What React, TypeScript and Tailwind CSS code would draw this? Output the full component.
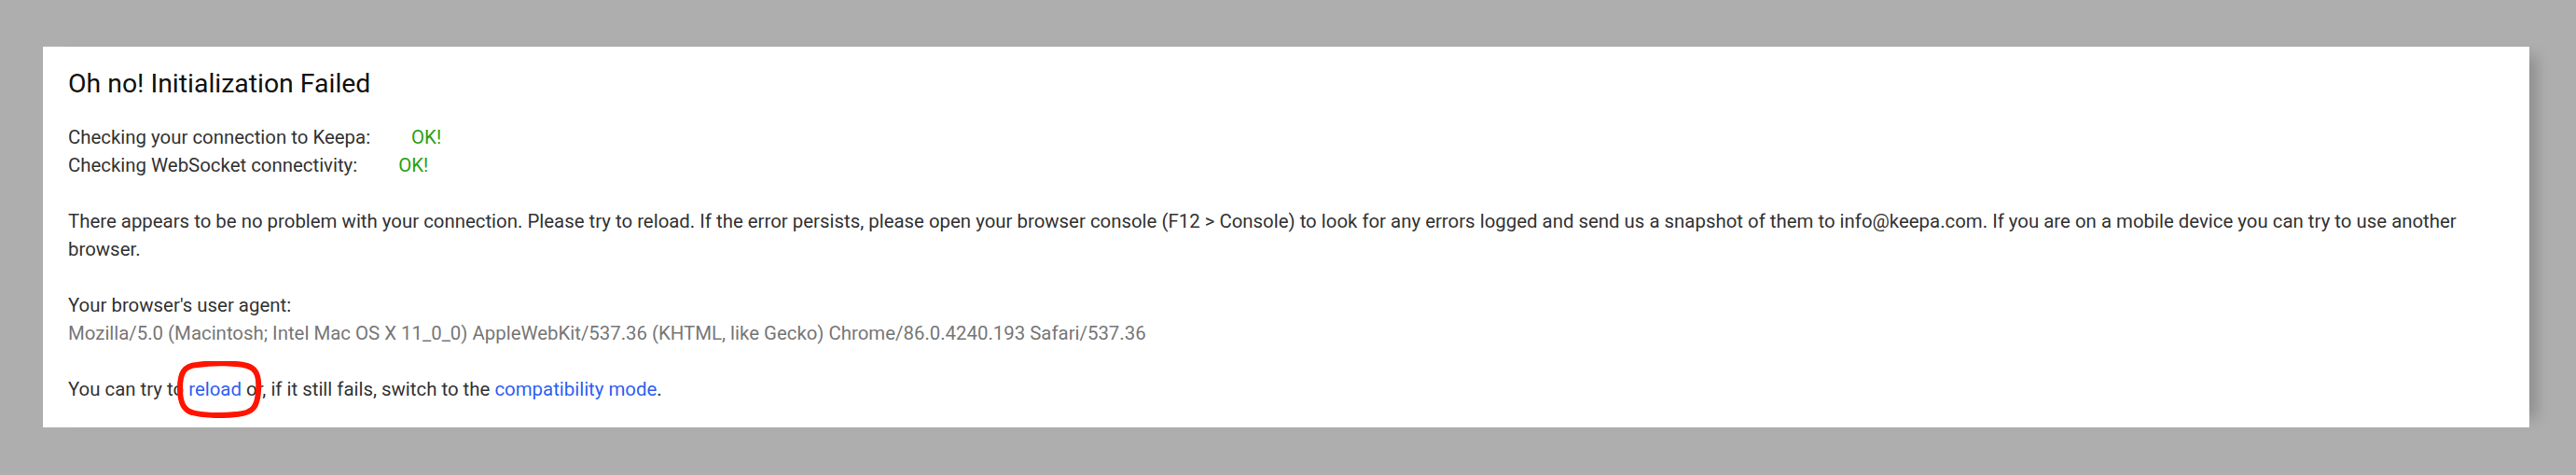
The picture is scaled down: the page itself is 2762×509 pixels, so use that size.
export default function App() {
  return (
    <div className="min-h-[509px] w-full bg-[#aeaeae] pt-[50px] pl-[46px] pr-[50px] font-['Roboto',sans-serif]">
      <div className="relative bg-white px-[27px] pt-[24px] pb-[26px] text-[20.4px] leading-[30px] text-[#333] shadow-[18px_0_14px_-10px_rgba(0,0,0,0.18)]">
        <h1 className="text-[28.4px] leading-[32px] font-normal text-[#111]">Oh no! Initialization Failed</h1>

        <div className="mt-[26px]">
          <div>
            Checking your connection to Keepa:<span className="ml-[44px] text-[#2ca012]">OK!</span>
          </div>
          <div>
            Checking WebSocket connectivity:<span className="ml-[44px] text-[#2ca012]">OK!</span>
          </div>
        </div>

        <p className="mt-[30px]">
          There appears to be no problem with your connection. Please try to reload. If the error persists, please open your
          browser console (F12 &gt; Console) to look for any errors logged and send us a snapshot of them to info@keepa.com.
          If you are on a mobile device you can try to use another browser.
        </p>

        <div className="mt-[30px]">
          <div>Your browser's user agent:</div>
          <div className="text-[#777]">
            Mozilla/5.0 (Macintosh; Intel Mac OS X 11_0_0) AppleWebKit/537.36 (KHTML, like Gecko) Chrome/86.0.4240.193
            Safari/537.36
          </div>
        </div>

        <p className="mt-[30px]">
          You can try to{" "}
          <span className="relative">
            <a href="#" className="text-[#2f5ff5]">reload</a>
            <svg
              className="pointer-events-none absolute left-[-13px] top-[-18px] h-[61px] w-[92px]"
              viewBox="0 0 92 61"
              fill="none"
            >
              <path
                d="M22 4 C42 1 64 2 76 5 C88 8 89 20 88 32 C87 48 83 56 64 57 C47 59 27 58 17 55 C6 52 4 41 4 29 C4 13 8 5 22 4 Z"
                stroke="#ff1400"
                strokeWidth="6"
                strokeLinejoin="round"
              />
            </svg>
          </span>{" "}
          or, if it still fails, switch to the{" "}
          <a href="#" className="text-[#2f5ff5]">compatibility mode</a>.
        </p>
      </div>
    </div>
  );
}
